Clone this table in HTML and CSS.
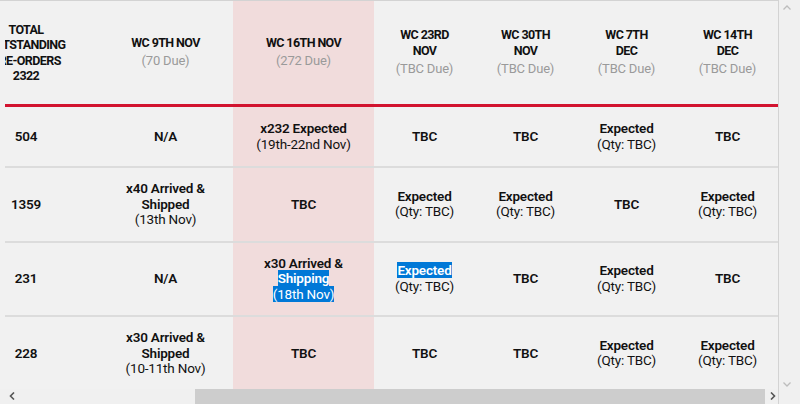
FILE: index.html
```html
<!DOCTYPE html>
<html>
<head>
<meta charset="utf-8">
<link rel="stylesheet" href="styles.css">
</head>
<body>
<div class="frame">
  <div class="main">
    <div class="viewport">
      <div class="table">
        <div class="row head">
          <div class="cell"><b>TOTAL<br>OUTSTANDING<br>PRE-ORDERS<br>2322</b></div>
          <div class="cell"><b>WC 9TH NOV</b><span class="due">(70 Due)</span></div>
          <div class="cell hl"><b>WC 16TH NOV</b><span class="due">(272 Due)</span></div>
          <div class="cell"><b>WC 23RD<br>NOV</b><span class="due">(TBC Due)</span></div>
          <div class="cell"><b>WC 30TH<br>NOV</b><span class="due">(TBC Due)</span></div>
          <div class="cell"><b>WC 7TH<br>DEC</b><span class="due">(TBC Due)</span></div>
          <div class="cell"><b>WC 14TH<br>DEC</b><span class="due">(TBC Due)</span></div>
        </div>
        <div class="row">
          <div class="cell"><b>504</b></div>
          <div class="cell"><b>N/A</b></div>
          <div class="cell hl"><b>x232 Expected</b><span>(19th-22nd Nov)</span></div>
          <div class="cell"><b>TBC</b></div>
          <div class="cell"><b>TBC</b></div>
          <div class="cell"><b>Expected</b><span>(Qty: TBC)</span></div>
          <div class="cell"><b>TBC</b></div>
        </div>
        <div class="row">
          <div class="cell"><b>1359</b></div>
          <div class="cell"><b>x40 Arrived &amp;<br>Shipped</b><span>(13th Nov)</span></div>
          <div class="cell hl"><b>TBC</b></div>
          <div class="cell"><b>Expected</b><span>(Qty: TBC)</span></div>
          <div class="cell"><b>Expected</b><span>(Qty: TBC)</span></div>
          <div class="cell"><b>TBC</b></div>
          <div class="cell"><b>Expected</b><span>(Qty: TBC)</span></div>
        </div>
        <div class="row">
          <div class="cell"><b>231</b></div>
          <div class="cell"><b>N/A</b></div>
          <div class="cell hl"><b>x30 Arrived &amp;</b><b><span class="sel">Shipping</span></b><span><span class="sel">(18th Nov)</span></span></div>
          <div class="cell"><b><span class="sel">Expected</span></b><span>(Qty: TBC)</span></div>
          <div class="cell"><b>TBC</b></div>
          <div class="cell"><b>Expected</b><span>(Qty: TBC)</span></div>
          <div class="cell"><b>TBC</b></div>
        </div>
        <div class="row">
          <div class="cell"><b>228</b></div>
          <div class="cell"><b>x30 Arrived &amp;<br>Shipped</b><span>(10-11th Nov)</span></div>
          <div class="cell hl"><b>TBC</b></div>
          <div class="cell"><b>TBC</b></div>
          <div class="cell"><b>TBC</b></div>
          <div class="cell"><b>Expected</b><span>(Qty: TBC)</span></div>
          <div class="cell"><b>Expected</b><span>(Qty: TBC)</span></div>
        </div>
      </div>
    </div>
    <div class="hscroll">
      <span class="arrow-l"><svg width="6" height="8" viewBox="0 0 6 8"><polyline points="5,0.5 1.5,4 5,7.5" fill="none" stroke="#555" stroke-width="1.6"/></svg></span>
      <div class="thumb"></div>
      <span class="arrow-r"><svg width="6" height="8" viewBox="0 0 6 8"><polyline points="1,0.5 4.5,4 1,7.5" fill="none" stroke="#555" stroke-width="1.6"/></svg></span>
    </div>
  </div>
  <div class="vscroll">
    <svg width="8" height="5" viewBox="0 0 8 5"><polyline points="0.5,4.5 4,1 7.5,4.5" fill="none" stroke="#bdbdbd" stroke-width="1.3"/></svg>
    <svg width="8" height="5" viewBox="0 0 8 5"><polyline points="0.5,0.5 4,4 7.5,0.5" fill="none" stroke="#bdbdbd" stroke-width="1.3"/></svg>
  </div>
</div>
</body>
</html>
```
FILE: styles.css
```css
* { box-sizing: border-box; }
html, body { margin: 0; padding: 0; }
body {
  width: 800px;
  height: 404px;
  overflow: hidden;
  background: #f1f1f1;
  font-family: Roboto, "Liberation Sans", sans-serif;
  color: #111;
}
.frame {
  display: flex;
  width: 800px;
  height: 404px;
}
.main {
  width: 779px;
  display: flex;
  flex-direction: column;
  border-top: 1px solid #d3d3d3;
  border-right: 1px solid #d3d3d3;
}
.viewport {
  margin-left: 5px;
  display: flex;
  justify-content: flex-end;
  overflow: hidden;
}
.table {
  flex: none;
  width: 824px;
}
.row {
  display: grid;
  grid-template-columns: 144px 135px 141px 101px 101px 101px 101px;
  border-bottom: 2px solid #dcdcdc;
  min-height: 61px;
}
.row.head {
  min-height: 106px;
  border-bottom: 3px solid #d2132f;
}
.cell {
  display: flex;
  flex-direction: column;
  align-items: center;
  justify-content: center;
  text-align: center;
  padding: 13px 4px;
  font-size: 13.5px;
  line-height: 15.5px;
  letter-spacing: -0.2px;
}
.cell b { font-weight: 600; }
.head .cell b { font-weight: 700; font-size: 12.5px; letter-spacing: -0.6px; }
.cell.hl { background: #f1dcdc; }
.due {
  color: #9a9a9a;
  font-size: 13px;
  line-height: 19px;
  margin-top: 1px;
}
.sel {
  background: #0078d7;
  color: #fff;
}
.hscroll {
  flex: 1;
  display: flex;
  align-items: flex-start;
  background: #f0f0f0;
}
.arrow-l {
  width: 25px;
  height: 13px;
  display: flex;
  align-items: center;
  padding-left: 9px;
}
.arrow-r {
  width: 13px;
  height: 13px;
  display: flex;
  align-items: center;
  padding-left: 5px;
}
.thumb {
  flex: 1;
  margin-left: 170px;
  height: 15px;
  background: #cdcdcd;
}
.vscroll {
  flex: 1;
  display: flex;
  flex-direction: column;
  justify-content: space-between;
  align-items: flex-start;
  padding: 5px 0 17px 4px;
  background: #f0f0f0;
}
```
